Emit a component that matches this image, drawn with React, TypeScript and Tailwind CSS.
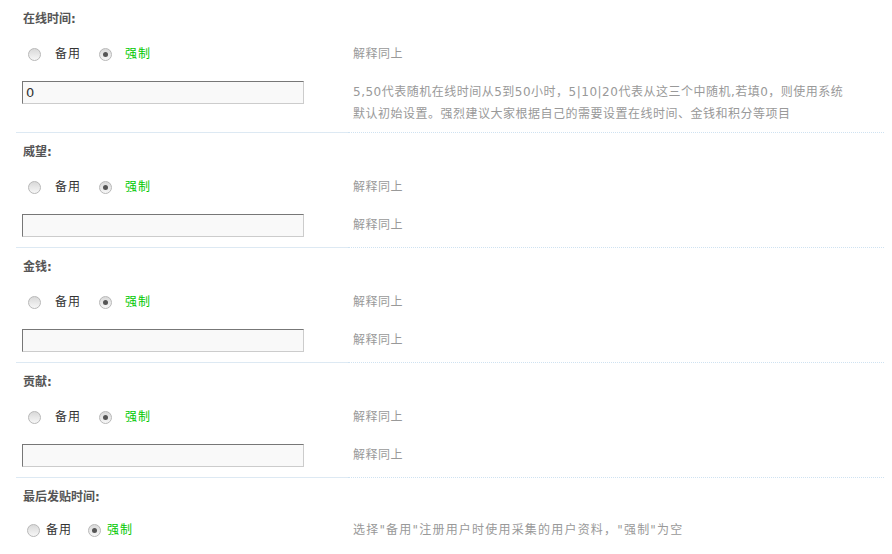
import React from "react";

const font = { fontFamily: '"DejaVu Sans", "Noto Sans CJK SC", sans-serif' };

function Radio({ checked }: { checked?: boolean }) {
  return (
    <span className="w-[13px] h-[13px] rounded-full border border-[#b8b8b8] bg-gradient-to-b from-[#d9d9d9] to-[#f7f7f7] flex items-center justify-center shrink-0">
      {checked && <span className="w-[5px] h-[5px] rounded-full bg-[#555]" />}
    </span>
  );
}

function RadioRow({ compact }: { compact?: boolean }) {
  if (compact) {
    return (
      <div className="flex items-center pl-[11px]">
        <Radio />
        <span className="ml-[6px] text-[#333] tracking-[1px]">备用</span>
        <span className="ml-[16px]"><Radio checked /></span>
        <span className="ml-[6px] text-[#00c800] tracking-[1px]">强制</span>
      </div>
    );
  }
  return (
    <div className="flex items-center pl-[12px]">
      <Radio />
      <span className="ml-[14px] text-[#333] tracking-[1px]">备用</span>
      <span className="ml-[18px]"><Radio checked /></span>
      <span className="ml-[13px] text-[#00c800] tracking-[1px]">强制</span>
    </div>
  );
}

function Block({
  title,
  value,
  desc,
  first,
}: {
  title: string;
  value?: string;
  desc: React.ReactNode;
  first?: boolean;
}) {
  return (
    <div>
      <div className="h-[37px] flex items-center pl-[7px] pt-[1px] font-bold text-[#555]">{title}</div>
      <div className="h-[34px] flex">
        <div className="w-[332px] flex items-center">
          <RadioRow />
        </div>
        <div className="flex-1 flex items-center pl-[5px] text-[#999] tracking-[0.5px]">解释同上</div>
      </div>
      <div className={`flex ${first ? "h-[62px]" : "h-[44px]"}`}>
        <div className="w-[332px] pt-[10px] pl-[6px] border-b border-[#dde9f3]">
          <div className="w-[282px] h-[23px] bg-[#f9f9f9] border-t border-l border-[#777] border-r-[#ccc] border-b-[#ccc] border-r border-b flex items-center pl-[3px] text-[13px] text-[#333]">
            {value}
          </div>
        </div>
        <div className="flex-1 pt-[10px] pl-[5px] leading-[22px] text-[#999] tracking-[0.5px] border-b border-dotted border-[#cfe2f1]">
          {desc}
        </div>
      </div>
    </div>
  );
}

export default function App() {
  return (
    <div className="w-[892px] h-[554px] bg-white overflow-hidden text-[12px]" style={font}>
      <div className="ml-[16px] w-[868px]">
        <Block
          first
          title="在线时间:"
          value="0"
          desc={
            <>
              5,50代表随机在线时间从5到50小时，5|10|20代表从这三个中随机,若填0，则使用系统
              <br />
              默认初始设置。强烈建议大家根据自己的需要设置在线时间、金钱和积分等项目
            </>
          }
        />
        <Block title="威望:" desc="解释同上" />
        <Block title="金钱:" desc="解释同上" />
        <Block title="贡献:" desc="解释同上" />
        <div>
          <div className="h-[37px] flex items-center pl-[7px] pt-[1px] font-bold text-[#555]">最后发贴时间:</div>
          <div className="h-[30px] flex">
            <div className="w-[332px] flex items-center">
              <RadioRow compact />
            </div>
            <div className="flex-1 flex items-center pl-[5px] text-[#999] tracking-[1.2px]">
              选择"备用"注册用户时使用采集的用户资料，"强制"为空
            </div>
          </div>
        </div>
      </div>
    </div>
  );
}
